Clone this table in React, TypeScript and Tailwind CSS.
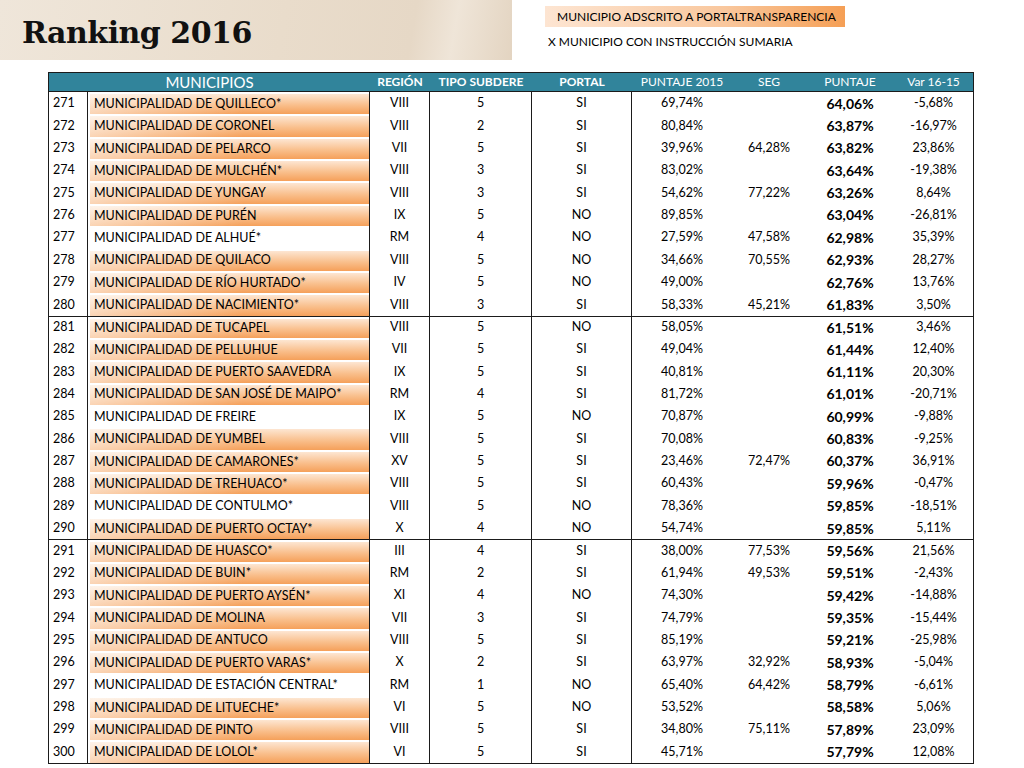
import React from "react";

type Row = [string, string, string, string, string, string, string, string, string, boolean];

const rows: Row[] = [
  ["271", "MUNICIPALIDAD DE QUILLECO*", "VIII", "5", "SI", "69,74%", "", "64,06%", "-5,68%", true],
  ["272", "MUNICIPALIDAD DE CORONEL", "VIII", "2", "SI", "80,84%", "", "63,87%", "-16,97%", true],
  ["273", "MUNICIPALIDAD DE PELARCO", "VII", "5", "SI", "39,96%", "64,28%", "63,82%", "23,86%", true],
  ["274", "MUNICIPALIDAD DE MULCHÉN*", "VIII", "3", "SI", "83,02%", "", "63,64%", "-19,38%", true],
  ["275", "MUNICIPALIDAD DE YUNGAY", "VIII", "3", "SI", "54,62%", "77,22%", "63,26%", "8,64%", true],
  ["276", "MUNICIPALIDAD DE PURÉN", "IX", "5", "NO", "89,85%", "", "63,04%", "-26,81%", true],
  ["277", "MUNICIPALIDAD DE ALHUÉ*", "RM", "4", "NO", "27,59%", "47,58%", "62,98%", "35,39%", false],
  ["278", "MUNICIPALIDAD DE QUILACO", "VIII", "5", "NO", "34,66%", "70,55%", "62,93%", "28,27%", true],
  ["279", "MUNICIPALIDAD DE RÍO HURTADO*", "IV", "5", "NO", "49,00%", "", "62,76%", "13,76%", true],
  ["280", "MUNICIPALIDAD DE NACIMIENTO*", "VIII", "3", "SI", "58,33%", "45,21%", "61,83%", "3,50%", true],
  ["281", "MUNICIPALIDAD DE TUCAPEL", "VIII", "5", "NO", "58,05%", "", "61,51%", "3,46%", true],
  ["282", "MUNICIPALIDAD DE PELLUHUE", "VII", "5", "SI", "49,04%", "", "61,44%", "12,40%", true],
  ["283", "MUNICIPALIDAD DE PUERTO SAAVEDRA", "IX", "5", "SI", "40,81%", "", "61,11%", "20,30%", true],
  ["284", "MUNICIPALIDAD DE SAN JOSÉ DE MAIPO*", "RM", "4", "SI", "81,72%", "", "61,01%", "-20,71%", true],
  ["285", "MUNICIPALIDAD DE FREIRE", "IX", "5", "NO", "70,87%", "", "60,99%", "-9,88%", false],
  ["286", "MUNICIPALIDAD DE YUMBEL", "VIII", "5", "SI", "70,08%", "", "60,83%", "-9,25%", true],
  ["287", "MUNICIPALIDAD DE CAMARONES*", "XV", "5", "SI", "23,46%", "72,47%", "60,37%", "36,91%", true],
  ["288", "MUNICIPALIDAD DE TREHUACO*", "VIII", "5", "SI", "60,43%", "", "59,96%", "-0,47%", true],
  ["289", "MUNICIPALIDAD DE CONTULMO*", "VIII", "5", "NO", "78,36%", "", "59,85%", "-18,51%", false],
  ["290", "MUNICIPALIDAD DE PUERTO OCTAY*", "X", "4", "NO", "54,74%", "", "59,85%", "5,11%", true],
  ["291", "MUNICIPALIDAD DE HUASCO*", "III", "4", "SI", "38,00%", "77,53%", "59,56%", "21,56%", true],
  ["292", "MUNICIPALIDAD DE BUIN*", "RM", "2", "SI", "61,94%", "49,53%", "59,51%", "-2,43%", true],
  ["293", "MUNICIPALIDAD DE PUERTO AYSÉN*", "XI", "4", "NO", "74,30%", "", "59,42%", "-14,88%", true],
  ["294", "MUNICIPALIDAD DE MOLINA", "VII", "3", "SI", "74,79%", "", "59,35%", "-15,44%", true],
  ["295", "MUNICIPALIDAD DE ANTUCO", "VIII", "5", "SI", "85,19%", "", "59,21%", "-25,98%", true],
  ["296", "MUNICIPALIDAD DE PUERTO VARAS*", "X", "2", "SI", "63,97%", "32,92%", "58,93%", "-5,04%", true],
  ["297", "MUNICIPALIDAD DE ESTACIÓN CENTRAL*", "RM", "1", "NO", "65,40%", "64,42%", "58,79%", "-6,61%", false],
  ["298", "MUNICIPALIDAD DE LITUECHE*", "VI", "5", "NO", "53,52%", "", "58,58%", "5,06%", true],
  ["299", "MUNICIPALIDAD DE PINTO", "VIII", "5", "SI", "34,80%", "75,11%", "57,89%", "23,09%", true],
  ["300", "MUNICIPALIDAD DE LOLOL*", "VI", "5", "SI", "45,71%", "", "57,79%", "12,08%", true],
];

const font = { fontFamily: "Lato, 'Open Sans', sans-serif" };

export default function App() {
  return (
    <div className="w-[1024px] h-[768px] bg-white text-black overflow-hidden" style={font}>
      <div className="flex h-[60px]">
        <div className="w-[512px] h-[60px] flex items-center pl-[22px] pt-[4px] bg-[linear-gradient(100deg,#efe6da_0%,#e9dccb_55%,#e6d8c6_80%,#efe5d8_88%,#e3d4c1_100%)]">
          <span className="text-[30px] font-bold text-[#111] tracking-[-0.5px]" style={{ fontFamily: "'DejaVu Serif', serif" }}>
            Ranking 2016
          </span>
        </div>
        <div className="flex flex-col pt-[6px] pl-[33px]">
          <div className="w-[300px] h-[21px] flex items-center pl-[12px] text-[12px] whitespace-nowrap bg-[linear-gradient(to_right,#fde5d2,#f9c79d_60%,#f59f55)]">
            MUNICIPIO ADSCRITO A PORTALTRANSPARENCIA
          </div>
          <div className="mt-[6px] pl-[3px] text-[12px] h-[18px] flex items-center whitespace-nowrap">
            <span className="mr-[3px]">X</span>MUNICIPIO CON INSTRUCCIÓN SUMARIA
          </div>
        </div>
      </div>

      <div className="ml-[48px] mt-[12px] w-[926px]">
        <div className="flex h-[20px] bg-[#31849b] border border-[#1b1b1b] text-white items-center text-[12px]">
          <div className="w-[321px] text-center text-[15px] leading-none">MUNICIPIOS</div>
          <div className="w-[60px] text-center font-bold">REGIÓN</div>
          <div className="w-[102px] text-center font-bold">TIPO SUBDERE</div>
          <div className="w-[100px] text-center font-bold">PORTAL</div>
          <div className="w-[100px] text-center">PUNTAJE 2015</div>
          <div className="w-[74px] text-center">SEG</div>
          <div className="w-[88px] text-center">PUNTAJE</div>
          <div className="flex-1 text-center">Var 16-15</div>
        </div>
        <div className="border-x border-b border-[#1b1b1b]">
          {rows.map((r, i) => (
            <div
              key={r[0]}
              className={`flex h-[22.37px] items-center text-[12.5px] ${i === 10 || i === 20 ? "border-t border-[#1b1b1b]" : ""}`}
            >
              <div className="w-[39px] h-full flex items-center pl-[4px] pt-[1px] border-r border-[#1b1b1b]">{r[0]}</div>
              <div className="w-[282px] h-full border-r border-[#1b1b1b] pl-[2px] pt-[2px]">
                <div
                  className={`h-full flex items-center pl-[4px] ${
                    r[9]
                      ? "bg-[linear-gradient(to_right,rgba(255,255,255,0.55),rgba(255,255,255,0)_55%),linear-gradient(to_bottom,#fde6d2,#f9bf8c_55%,#f5a05a)]"
                      : ""
                  }`}
                >
                  {r[1]}
                </div>
              </div>
              <div className="w-[60px] h-full flex items-center justify-center pt-[1px] border-r border-[#1b1b1b]">{r[2]}</div>
              <div className="w-[102px] h-full flex items-center justify-center pt-[1px] border-r border-[#1b1b1b]">{r[3]}</div>
              <div className="w-[100px] h-full flex items-center justify-center pt-[1px] border-r border-[#1b1b1b]">{r[4]}</div>
              <div className="w-[100px] text-center pt-[1px]">{r[5]}</div>
              <div className="w-[74px] text-center pt-[1px]">{r[6]}</div>
              <div className="w-[88px] text-center font-bold text-[14px]">{r[7]}</div>
              <div className="flex-1 text-center pt-[1px]">{r[8]}</div>
            </div>
          ))}
        </div>
      </div>
    </div>
  );
}
